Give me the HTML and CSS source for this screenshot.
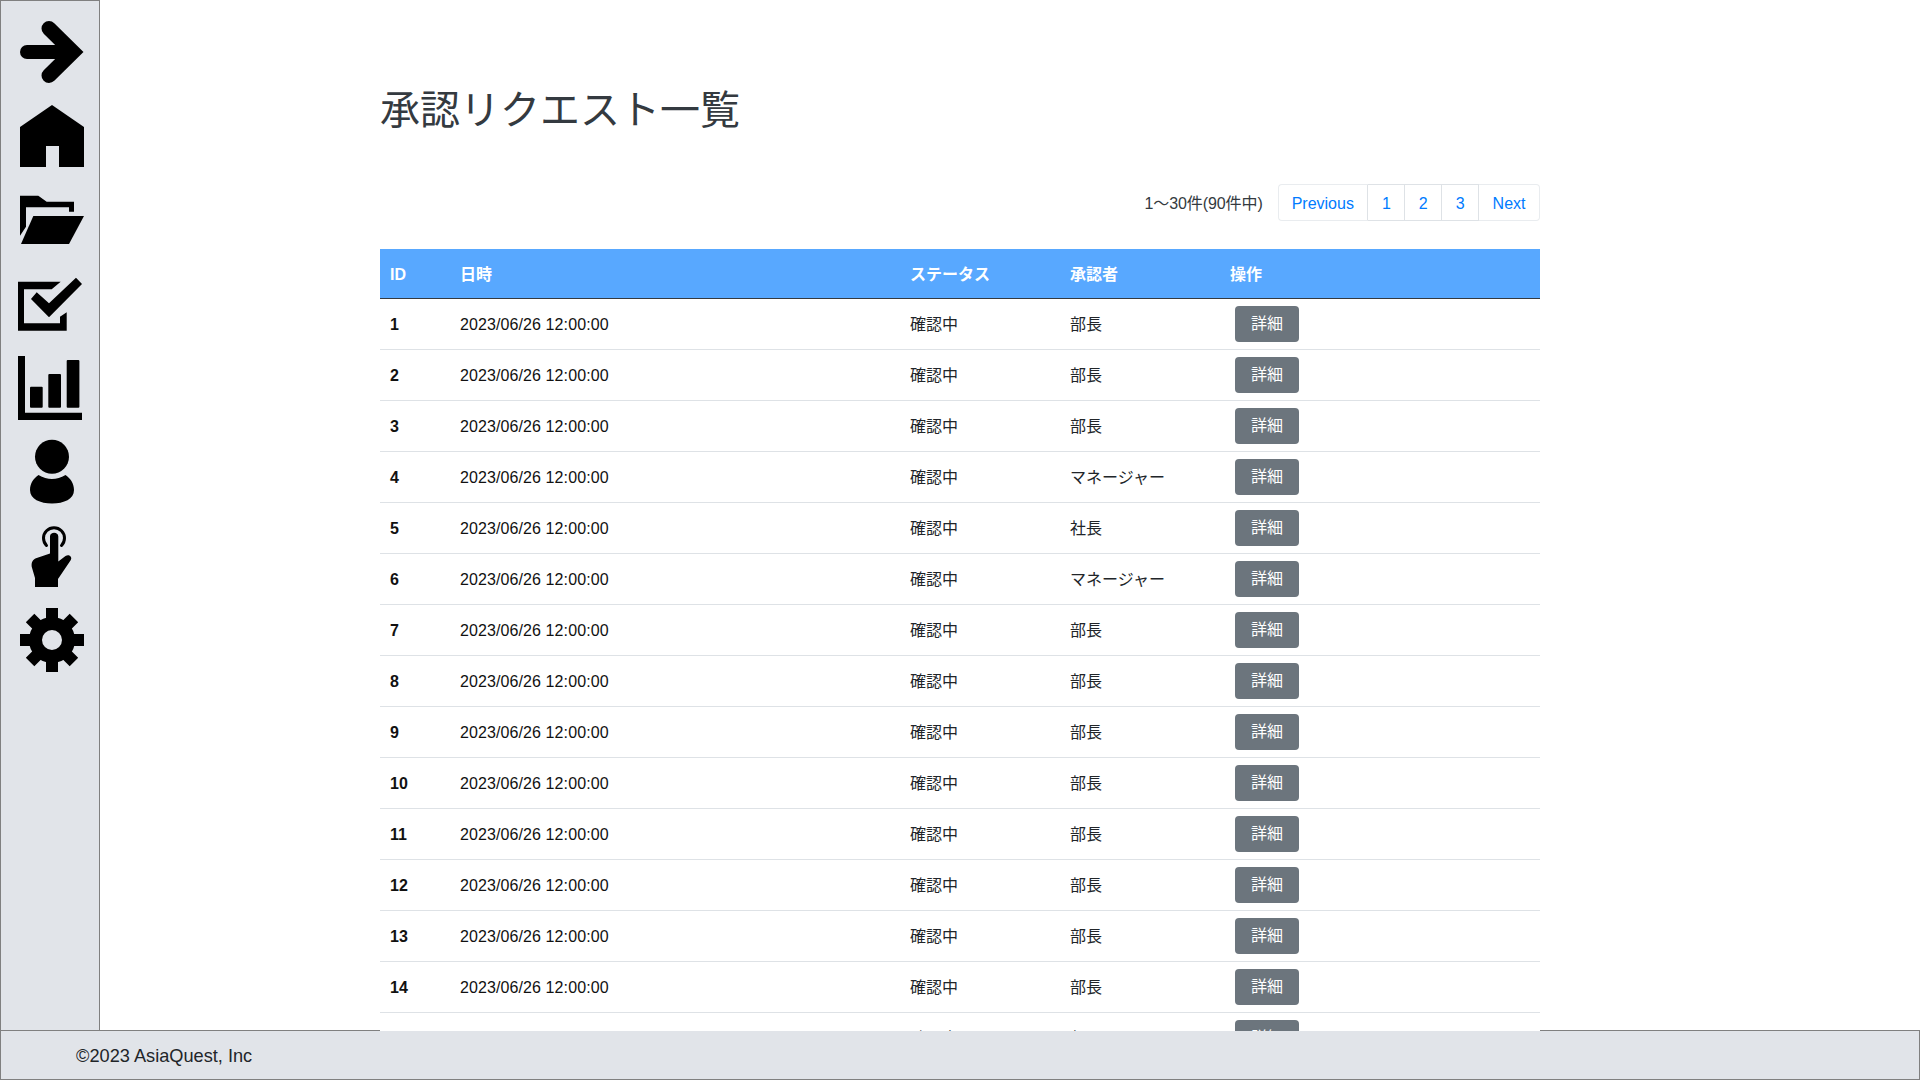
FILE: index.html
```html
<!DOCTYPE html>
<html lang="ja">
<head>
<meta charset="utf-8">
<title>承認リクエスト一覧</title>
<link rel="stylesheet" href="styles.css">
</head>
<body>
<div class="app">
  <div class="top">
    <nav class="sidebar">
      <svg class="icon" viewBox="0 0 64 64"><path d="M7 32H50" fill="none" stroke="#000" stroke-width="14" stroke-linecap="round"/><path d="M29 8.5L52.8 32L29 55.5" fill="none" stroke="#000" stroke-width="15" stroke-linecap="round" stroke-miterlimit="4"/></svg>
      <svg class="icon" viewBox="0 0 64 64"><path d="M32 1L64 23V63H39V42H26V63H0V23Z"/></svg>
      <svg class="icon" viewBox="0 0 64 64"><path d="M0 7.7H18.3L26.7 13.7H54V23.7H49V19.3H6V38.7L0 47.7Z"/><path d="M13.3 28H64L49 56H1Z"/></svg>
      <svg class="icon" viewBox="0 0 64 64"><path d="M-2 9.7H40.7L31.7 17.3H4V51.3H40V44.7L46.7 40.3V58.7H-2Z"/><path d="M16.7 20.3L29 31.3L56 5.7L62 12L29 45.3L11 27Z"/></svg>
      <svg class="icon" viewBox="0 0 64 64"><path d="M-2 0H5V56.7H62V64H-2Z"/><rect x="10" y="30.7" width="12.7" height="21" rx="1"/><rect x="28.3" y="18" width="12.7" height="33.7" rx="1"/><rect x="46.7" y="4" width="12.7" height="47.7" rx="1"/></svg>
      <svg class="icon" viewBox="0 0 64 64"><circle cx="32" cy="16.7" r="17"/><path d="M18.5 35Q32 43 45.5 35C50 38 54 43 54 50C54 59 44 63.5 32 63.5C20 63.5 10 59 10 50C10 43 14 38 18.5 35Z"/></svg>
      <svg class="icon" viewBox="0 0 64 64"><path d="M26.5 21.5A10.5 10.5 0 1 1 41.5 21.5" fill="none" stroke="#000" stroke-width="3" stroke-linecap="round"/><path d="M30 12.5C30 7.5 38.3 7.5 38.3 12.5V37.5L45.5 32C49 29.5 53 33 50.5 36.5L38 55V63H15V54L11.7 42.7C11.2 38 13 35.5 16 34.3L30 29.5Z"/></svg>
      <svg class="icon" viewBox="0 0 64 64"><circle cx="32" cy="32" r="16.5" fill="none" stroke="#000" stroke-width="13"/><path d="M32 0V12M32 52V64M0 32H12M52 32H64" stroke="#000" stroke-width="12"/><path d="M32 1V12M32 52V63M1 32H12M52 32H63" stroke="#000" stroke-width="12" transform="rotate(45 32 32)"/></svg>
    </nav>
    <main class="main">
      <h1 class="title">承認リクエスト一覧</h1>
      <div class="pager-row">
        <span class="count">1〜30件(90件中)</span>
        <ul class="pagination">
          <li class="page-item"><a class="page-link" href="#">Previous</a></li>
          <li class="page-item"><a class="page-link" href="#">1</a></li>
          <li class="page-item"><a class="page-link" href="#">2</a></li>
          <li class="page-item"><a class="page-link" href="#">3</a></li>
          <li class="page-item"><a class="page-link" href="#">Next</a></li>
        </ul>
      </div>
      <table class="table">
        <colgroup><col class="c-id"><col class="c-date"><col class="c-status"><col class="c-appr"><col class="c-act"></colgroup>
        <thead><tr><th>ID</th><th>日時</th><th>ステータス</th><th>承認者</th><th>操作</th></tr></thead>
        <tbody>
          <tr><th>1</th><td class="date">2023/06/26 12:00:00</td><td>確認中</td><td>部長</td><td class="act"><button class="btn">詳細</button></td></tr>
          <tr><th>2</th><td class="date">2023/06/26 12:00:00</td><td>確認中</td><td>部長</td><td class="act"><button class="btn">詳細</button></td></tr>
          <tr><th>3</th><td class="date">2023/06/26 12:00:00</td><td>確認中</td><td>部長</td><td class="act"><button class="btn">詳細</button></td></tr>
          <tr><th>4</th><td class="date">2023/06/26 12:00:00</td><td>確認中</td><td>マネージャー</td><td class="act"><button class="btn">詳細</button></td></tr>
          <tr><th>5</th><td class="date">2023/06/26 12:00:00</td><td>確認中</td><td>社長</td><td class="act"><button class="btn">詳細</button></td></tr>
          <tr><th>6</th><td class="date">2023/06/26 12:00:00</td><td>確認中</td><td>マネージャー</td><td class="act"><button class="btn">詳細</button></td></tr>
          <tr><th>7</th><td class="date">2023/06/26 12:00:00</td><td>確認中</td><td>部長</td><td class="act"><button class="btn">詳細</button></td></tr>
          <tr><th>8</th><td class="date">2023/06/26 12:00:00</td><td>確認中</td><td>部長</td><td class="act"><button class="btn">詳細</button></td></tr>
          <tr><th>9</th><td class="date">2023/06/26 12:00:00</td><td>確認中</td><td>部長</td><td class="act"><button class="btn">詳細</button></td></tr>
          <tr><th>10</th><td class="date">2023/06/26 12:00:00</td><td>確認中</td><td>部長</td><td class="act"><button class="btn">詳細</button></td></tr>
          <tr><th>11</th><td class="date">2023/06/26 12:00:00</td><td>確認中</td><td>部長</td><td class="act"><button class="btn">詳細</button></td></tr>
          <tr><th>12</th><td class="date">2023/06/26 12:00:00</td><td>確認中</td><td>部長</td><td class="act"><button class="btn">詳細</button></td></tr>
          <tr><th>13</th><td class="date">2023/06/26 12:00:00</td><td>確認中</td><td>部長</td><td class="act"><button class="btn">詳細</button></td></tr>
          <tr><th>14</th><td class="date">2023/06/26 12:00:00</td><td>確認中</td><td>部長</td><td class="act"><button class="btn">詳細</button></td></tr>
          <tr><th>15</th><td class="date">2023/06/26 12:00:00</td><td>確認中</td><td>部長</td><td class="act"><button class="btn">詳細</button></td></tr>
        </tbody>
      </table>
    </main>
  </div>
  <footer class="footer">©2023 AsiaQuest, Inc</footer>
</div>
</body>
</html>
```
FILE: styles.css
```css
* { box-sizing: border-box; }
html, body { margin: 0; height: 100%; overflow: hidden; }
body {
  font-family: "Liberation Sans", "Noto Sans CJK JP", sans-serif;
  font-size: 16px;
  color: #212529;
  background: #fff;
}
.app { display: flex; flex-direction: column; height: 1080px; }
.top { flex: 1; min-height: 0; display: flex; }
.sidebar {
  flex: 0 0 100px;
  display: flex;
  flex-direction: column;
  gap: 20px;
  padding: 19px 0 0 19px;
  background: #e1e4e9;
  border: 1px solid #808080;
  border-bottom: 0;
}
.icon { display: block; width: 64px; height: 64px; flex: none; overflow: visible; }
.main {
  flex: 1;
  min-width: 0;
  padding: 0 380px 0 280px;
  margin-bottom: -1px;
  position: relative;
  z-index: 1;
  overflow: hidden;
}
.title {
  margin: 0;
  padding-top: 80px;
  height: 184px;
  font-size: 40px;
  font-weight: 400;
  line-height: 60px;
  color: #343a40;
}
.pager-row {
  display: flex;
  justify-content: flex-end;
  align-items: flex-start;
  gap: 15px;
  height: 65px;
}
.count { line-height: 39px; letter-spacing: -0.1px; color: #343a40; }
.pagination { display: flex; list-style: none; margin: 0; padding: 0; }
.page-link {
  display: block;
  height: 37px;
  padding: 1px 13.5px 0;
  line-height: 35px;
  color: #007bff;
  text-decoration: none;
  background: #fff;
  border: 1px solid #dee2e6;
  border-left-width: 0;
}
.page-item:first-child .page-link {
  padding-left: 13px;
  border-width: 1px 1px 1px 1px;
  border-color: #e9ecef #dee2e6 #e9ecef #e9ecef;
  border-radius: 4px 0 0 4px;
}
.page-item:last-child .page-link {
  border-color: #e9ecef;
  border-radius: 0 4px 4px 0;
}
.table {
  width: 1160px;
  table-layout: fixed;
  border-collapse: separate;
  border-spacing: 0;
  background: #fff;
  color: #212529;
  line-height: 24px;
}
.c-id { width: 70px; }
.c-date { width: 450px; }
.c-status { width: 160px; }
.c-appr { width: 160px; }
.c-act { width: 320px; }
.table thead th {
  height: 50px;
  padding: 2px 10px 0;
  text-align: left;
  font-weight: 700;
  color: #fff;
  background: #58a8ff;
  border-bottom: 1px solid #343a40;
}
.table tbody th, .table tbody td {
  height: 51px;
  padding: 1px 10px 0;
  text-align: left;
  border-bottom: 1px solid #dee2e6;
}
.table tbody th { font-weight: 700; color: #111; }
.table tbody .date { color: #111; letter-spacing: 0.1px; }
.table tbody .act { padding-top: 7px; vertical-align: top; }
.btn {
  display: block;
  width: 64px;
  height: 36px;
  margin-left: 5px;
  padding: 0;
  font: inherit;
  line-height: 36px;
  color: #fff;
  background: #6c757d;
  border: 0;
  border-radius: 4px;
}
.footer {
  flex: 0 0 50px;
  padding: 2px 0 0 75px;
  font-size: 18.2px;
  line-height: 46px;
  color: #212529;
  background: #e1e4e9;
  border: 1px solid #808080;
}
```
